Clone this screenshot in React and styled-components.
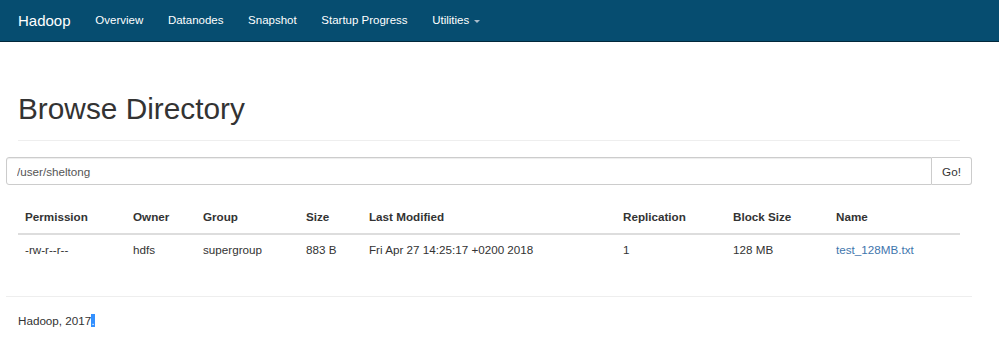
import React from "react";
import styled, { createGlobalStyle } from "styled-components";

const Global = createGlobalStyle`
  html, body { margin: 0; padding: 0; background: #fff; }
  body {
    font-family: "Liberation Sans", Arial, sans-serif;
    font-size: 11.67px;
    line-height: 16.67px;
    color: #333;
  }
  * { box-sizing: border-box; }
`;

const Navbar = styled.nav`
  height: 42px;
  background: #064d70;
  border-bottom: 1px solid #02283b;
  display: flex;
  align-items: center;
  padding-left: 5.5px;
`;

const Brand = styled.a`
  font-size: 15px;
  color: #fff;
  padding: 0 12.5px;
  text-decoration: none;
  line-height: 41px;
`;

const NavLink = styled.a`
  font-size: 11.5px;
  color: #fff;
  padding: 0 12.3px;
  text-decoration: none;
  line-height: 41px;
  display: flex;
  align-items: center;
`;

const Caret = styled.span`
  display: inline-block;
  width: 0;
  height: 0;
  margin-left: 5px;
  margin-top: 1px;
  border-top: 3.5px solid #a9bccb;
  border-left: 3.5px solid transparent;
  border-right: 3.5px solid transparent;
`;

const Container = styled.div`
  width: 966px;
  margin-left: 6px;
`;

const PageHeader = styled.div`
  margin: 50px 12px 0;
  padding-bottom: 15px;
  border-bottom: 1px solid #eee;
`;

const Title = styled.h1`
  margin: 0;
  font-size: 29.8px;
  line-height: 33px;
  font-weight: 400;
  color: #333;
`;

const InputGroup = styled.div`
  margin-top: 16px;
  display: flex;
  height: 28px;
`;

const PathInput = styled.input`
  flex: 1;
  height: 28px;
  border: 1px solid #ccc;
  border-radius: 3px 0 0 3px;
  padding: 0 10px;
  font-family: "Liberation Sans", Arial, sans-serif;
  font-size: 11.67px;
  color: #555;
  outline: none;
  box-shadow: inset 0 1px 1px rgba(0, 0, 0, 0.075);
`;

const GoButton = styled.button`
  width: 40px;
  height: 28px;
  border: 1px solid #ccc;
  border-left: none;
  border-radius: 0 3px 3px 0;
  background: #fff;
  color: #333;
  font-family: "Liberation Sans", Arial, sans-serif;
  font-size: 11.67px;
  padding: 0;
`;

const Table = styled.table`
  margin: 17px 12px 0;
  width: 942px;
  border-collapse: collapse;
  table-layout: fixed;
`;

const Th = styled.th`
  width: ${(p) => p.$w}px;
  text-align: left;
  font-weight: 700;
  padding: 7px 7px;
  height: 30px;
  border-bottom: 2px solid #ddd;
  color: #333;
`;

const Td = styled.td`
  padding: 7px 7px;
  height: 30px;
  color: #333;
  white-space: nowrap;
`;

const FileLink = styled.a`
  color: #3f76ad;
  text-decoration: none;
`;

const FooterRule = styled.hr`
  margin: 31px 0 0;
  border: 0;
  border-top: 1px solid #eee;
`;

const Footer = styled.p`
  margin: 16px 12px 0;
  color: #333;
`;

const Selected = styled.span`
  background: #3390ff;
  color: #fff;
`;

const cols = [
  ["Permission", 108, "-rw-r--r--"],
  ["Owner", 70, "hdfs"],
  ["Group", 103, "supergroup"],
  ["Size", 63, "883 B"],
  ["Last Modified", 254, "Fri Apr 27 14:25:17 +0200 2018"],
  ["Replication", 110, "1"],
  ["Block Size", 103, "128 MB"],
  ["Name", 131, "test_128MB.txt"],
];

export default function App() {
  return (
    <>
      <Global />
      <Navbar>
        <Brand href="#">Hadoop</Brand>
        <NavLink href="#">Overview</NavLink>
        <NavLink href="#">Datanodes</NavLink>
        <NavLink href="#">Snapshot</NavLink>
        <NavLink href="#">Startup Progress</NavLink>
        <NavLink href="#">
          Utilities
          <Caret />
        </NavLink>
      </Navbar>
      <Container>
        <PageHeader>
          <Title>Browse Directory</Title>
        </PageHeader>
        <InputGroup>
          <PathInput defaultValue="/user/sheltong" />
          <GoButton>Go!</GoButton>
        </InputGroup>
        <Table>
          <thead>
            <tr>
              {cols.map(([h, w]) => (
                <Th key={h} $w={w}>
                  {h}
                </Th>
              ))}
            </tr>
          </thead>
          <tbody>
            <tr>
              {cols.map(([h, , v]) => (
                <Td key={h}>
                  {h === "Name" ? <FileLink href="#">{v}</FileLink> : v}
                </Td>
              ))}
            </tr>
          </tbody>
        </Table>
        <FooterRule />
        <Footer>
          Hadoop, 2017<Selected>.</Selected>
        </Footer>
      </Container>
    </>
  );
}
